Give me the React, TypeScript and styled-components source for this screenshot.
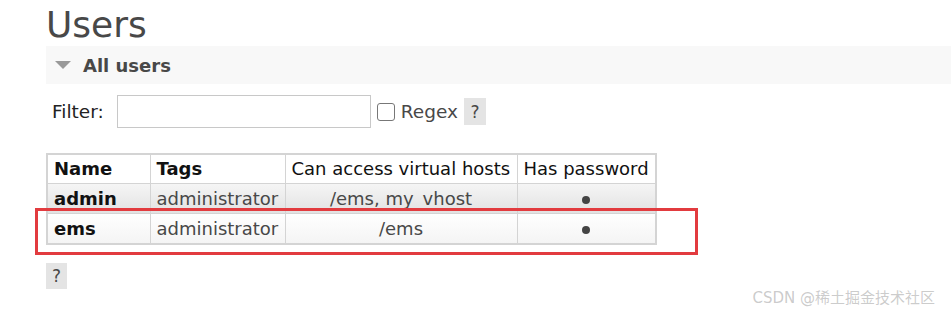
import React from "react"
import styled, { createGlobalStyle } from "styled-components"

const GlobalStyle = createGlobalStyle`
  html, body {
    margin: 0;
    padding: 0;
    background: #ffffff;
  }
  body {
    font-family: "DejaVu Sans", Verdana, sans-serif;
    color: #484848;
  }
`

const Page = styled.div`
  position: relative;
  width: 951px;
  height: 315px;
  overflow: hidden;
  padding-left: 46px;
  box-sizing: border-box;
`

const Title = styled.h1`
  margin: 0;
  padding-top: 3px;
  height: 43px;
  font-size: 36px;
  font-weight: normal;
  line-height: 44px;
  color: #484848;
`

const SectionHeader = styled.div`
  display: flex;
  align-items: center;
  gap: 12px;
  height: 38px;
  margin-right: -46px;
  padding-left: 9px;
  background: #f8f8f8;
  font-size: 18px;
  font-weight: bold;
  color: #484848;
`

const Triangle = styled.span`
  width: 0;
  height: 0;
  border-left: 8px solid transparent;
  border-right: 8px solid transparent;
  border-top: 8px solid #999999;
`

const FilterRow = styled.div`
  display: flex;
  align-items: center;
  margin-top: 11px;
  padding-left: 6px;
  height: 33px;
  font-size: 18.5px;
  color: #222222;
`

const FilterLabel = styled.label`
  margin-right: 13px;
`

const FilterInput = styled.input`
  box-sizing: border-box;
  width: 254px;
  height: 33px;
  border: 1px solid #c8c8c8;
  margin: 0 6px 0 0;
`

const CheckBox = styled.span`
  box-sizing: border-box;
  width: 18px;
  height: 18px;
  border: 1px solid #777777;
  border-radius: 3px;
  margin-right: 6px;
`

const RegexText = styled.span`
  color: #484848;
  margin-right: 6px;
`

const Help = styled.span`
  display: inline-flex;
  align-items: center;
  justify-content: center;
  width: 22px;
  height: 27px;
  background: #e4e4e4;
  font-size: 17px;
  color: #484848;
`

const Table = styled.table`
  margin-top: 25px;
  border-collapse: collapse;
  border: 2px solid #d4d4d4;
  font-size: 18px;
  table-layout: fixed;
`

const HeadCell = styled.th<{ $bold?: boolean; $w: number }>`
  width: ${(p) => p.$w}px;
  box-sizing: border-box;
  height: 29px;
  padding: 0 6px;
  text-align: left;
  font-weight: ${(p) => (p.$bold ? "bold" : "normal")};
  color: #111111;
  border: 1px solid #d4d4d4;
  white-space: nowrap;
  background: #ffffff;
`

const Row = styled.tr<{ $alt?: boolean }>`
  background: ${(p) =>
    p.$alt
      ? "linear-gradient(to bottom, #f6f6f6, #e2e2e2)"
      : "linear-gradient(to bottom, #ffffff, #f4f4f4)"};
`

const Cell = styled.td<{ $name?: boolean; $center?: boolean }>`
  height: 28px;
  padding: 1px 6px 0;
  border: 1px solid #d4d4d4;
  white-space: nowrap;
  text-align: ${(p) => (p.$center ? "center" : "left")};
  font-weight: ${(p) => (p.$name ? "bold" : "normal")};
  color: ${(p) => (p.$name ? "#111111" : "#484848")};
`

const Dot = styled.span`
  display: inline-block;
  width: 8px;
  height: 8px;
  border-radius: 50%;
  background: #444444;
  vertical-align: middle;
`

const Highlight = styled.div`
  position: absolute;
  left: 35px;
  top: 208px;
  width: 663px;
  height: 47px;
  box-sizing: border-box;
  border: 3px solid #e23b3f;
  pointer-events: none;
`

const BottomHelp = styled(Help)`
  margin-top: 18px;
  width: 21px;
  height: 26px;
`

const Watermark = styled.div`
  position: absolute;
  right: 16px;
  top: 286px;
  font-family: "DejaVu Sans", "Noto Sans CJK SC", sans-serif;
  font-size: 15px;
  color: rgba(160, 160, 160, 0.55);
  white-space: nowrap;
`

const users = [
  { name: "admin", tags: "administrator", vhosts: "/ems, my_vhost", alt: true },
  { name: "ems", tags: "administrator", vhosts: "/ems", alt: false },
]

export default function App() {
  return (
    <>
      <GlobalStyle />
      <Page>
        <Title>Users</Title>
        <SectionHeader>
          <Triangle />
          All users
        </SectionHeader>
        <FilterRow>
          <FilterLabel>Filter:</FilterLabel>
          <FilterInput type="text" />
          <CheckBox />
          <RegexText>Regex</RegexText>
          <Help>?</Help>
        </FilterRow>
        <Table>
          <thead>
            <tr>
              <HeadCell $bold $w={103}>Name</HeadCell>
              <HeadCell $bold $w={135}>Tags</HeadCell>
              <HeadCell $w={232}>Can access virtual hosts</HeadCell>
              <HeadCell $w={139}>Has password</HeadCell>
            </tr>
          </thead>
          <tbody>
            {users.map((u) => (
              <Row key={u.name} $alt={u.alt}>
                <Cell $name>{u.name}</Cell>
                <Cell>{u.tags}</Cell>
                <Cell $center>{u.vhosts}</Cell>
                <Cell $center>
                  <Dot />
                </Cell>
              </Row>
            ))}
          </tbody>
        </Table>
        <BottomHelp>?</BottomHelp>
        <Highlight />
        <Watermark>CSDN @稀土掘金技术社区</Watermark>
      </Page>
    </>
  )
}
